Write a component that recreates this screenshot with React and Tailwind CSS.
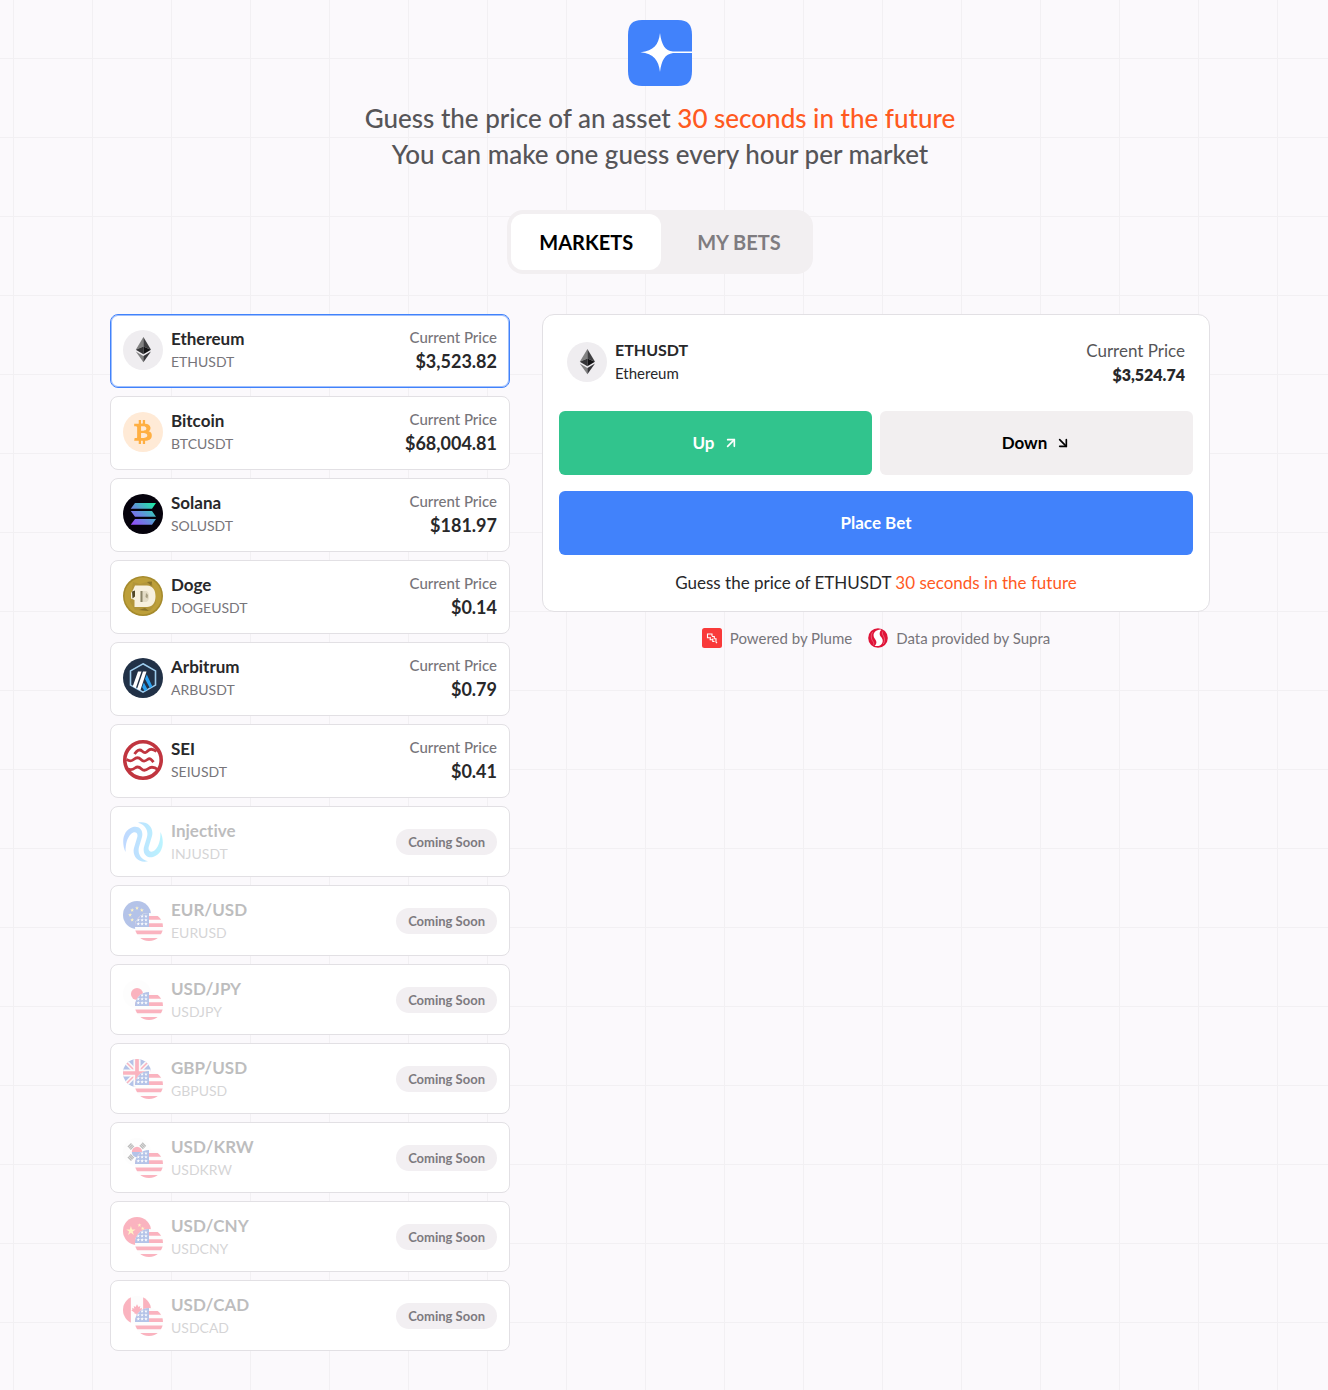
import { useState } from "react";
import { FaBtc } from "react-icons/fa";
import { ArrowDownRight, ArrowUpRight } from "lucide-react";

const STAR = "M0-1 .22-.31 .95-.31 .36 .12 .59 .81 0 .38-.59 .81-.36 .12-.95-.31-.22-.31Z";

function Star({ x, y, r, fill = "#fff" }) {
  return <path d={STAR} transform={`translate(${x} ${y}) scale(${r})`} fill={fill} />;
}

function Logo() {
  return (
    <svg width="64" height="66" viewBox="0 0 64 66" role="img" aria-label="Logo">
      <path d="M14 0H50C60 0 64 5 64 15V51C64 61 60 66 50 66H14C4 66 0 61 0 51V15C0 5 4 0 14 0Z" fill="#4182fb" />
      <path
        d="M32 13C33.5 25 37 30.500 45 31.600H64V33H45C37 34.200 33.500 40 32 52C30.500 40 26 34 12.500 32.300C26 30.500 30.500 25 32 13Z"
        fill="#fff"
      />
    </svg>
  );
}

function EthIcon() {
  return (
    <svg className="size-10 shrink-0" viewBox="0 0 40 40" aria-hidden="true">
      <circle cx="20" cy="20" r="20" fill="#efedf0" />
      <path d="M20.400 7 12.800 19.800 20.400 16.400Z" fill="#828282" />
      <path d="M20.400 7 28 19.800 20.400 16.400Z" fill="#3f3f41" />
      <path d="M12.800 19.800 20.400 16.400V24.300Z" fill="#353537" />
      <path d="M28 19.800 20.400 16.400V24.300Z" fill="#131315" />
      <path d="M12.800 21.600 20.400 26V32.300Z" fill="#828282" />
      <path d="M28 21.600 20.400 26V32.300Z" fill="#37373a" />
    </svg>
  );
}

function BtcIcon() {
  return (
    <span className="flex size-10 shrink-0 items-center justify-center rounded-full bg-[#ffead6] text-[#ffaf42]">
      <FaBtc size={24} aria-hidden="true" />
    </span>
  );
}

function SolIcon() {
  return (
    <svg className="size-10 shrink-0" viewBox="0 0 40 40" aria-hidden="true">
      <defs>
        <linearGradient id="sol" x1="9" y1="32" x2="31" y2="8" gradientUnits="userSpaceOnUse">
          <stop offset="0" stopColor="#9945ff" />
          <stop offset="0.5" stopColor="#5f93d8" />
          <stop offset="1" stopColor="#19f0a0" />
        </linearGradient>
      </defs>
      <circle cx="20" cy="20" r="20" fill="#05020c" />
      <path d="M12 9H33L29 14.700H7.700ZM7.700 17H29L33 22.700H12ZM12 25H33L29 30.700H7.700Z" fill="url(#sol)" />
    </svg>
  );
}

function DogeIcon() {
  return (
    <svg className="size-10 shrink-0" viewBox="0 0 40 40" aria-hidden="true">
      <circle cx="20" cy="20" r="20" fill="#a58a2c" />
      <circle cx="20" cy="20" r="18.500" fill="#bd9f3a" />
      <path d="M10 6 17 8 27 5 30 9 33 27 27 35 12 34 7 26Z" fill="#b2953a" />
      <path d="M12 9.500H24C30 10 32.500 14 32.500 20.500 32.500 27 29 31 24 31H11.500V24L8 22.500V17L10 14Z" fill="#f7f0de" />
      <path d="M17.500 15H22C25 15 26 17 26 20.500S25 26 22 26H17.500Z" fill="#e4dcc6" />
      <path d="M17.500 15H19.500V26H17.500Z" fill="#8b8468" />
      <path d="M9 15.500 12 14.500V20.500L9.500 22.500Z" fill="#504626" />
      <path d="M23 17 25 19 24.500 22.500 22.500 21Z" fill="#a89f83" />
      <path d="M24 6 29 5.500 28.500 10ZM16 34 22 32 26 35Z" fill="#8a7328" />
    </svg>
  );
}

function ArbIcon() {
  return (
    <svg className="size-10 shrink-0" viewBox="0 0 40 40" aria-hidden="true">
      <circle cx="20" cy="20" r="20" fill="#213147" />
      <path d="M20 5.800 32.500 12.900V27.100L20 34.200 7.500 27.100V12.900Z" fill="none" stroke="#9dcced" strokeWidth="1.600" />
      <path d="M15 13.500H18.500L12.800 30.300 9.700 28.500ZM20 13.500H23.500L17.300 32.500 14 31Z" fill="#fff" />
      <path d="M22 21 23.800 16.500 29.400 28.500 26.900 30ZM20.800 24.500 24.600 31.500 21.600 33 19.200 29.200Z" fill="#28a0f0" />
    </svg>
  );
}

function SeiIcon() {
  return (
    <svg className="size-10 shrink-0" viewBox="0 0 40 40" aria-hidden="true">
      <circle cx="20" cy="20" r="18.200" fill="#fff" stroke="#c0353f" strokeWidth="3.600" />
      <g fill="none" stroke="#c0353f" strokeWidth="2.800">
        <path d="M11.500 14C14 10.500 16.500 8.700 19 11S23 13 25 10.800 29.500 8.500 33.500 11.500" />
        <path d="M3.500 19.500C7 21.500 8.500 21.500 11 19.300S15.500 17 18 19.500 22 21.500 24.500 19.500 28.500 19.500 30.500 22.200" />
        <path d="M5 29C8.500 30.500 10 29.500 12 28S16 26.500 18.500 29 23 30.500 25.500 28.500 31.500 27 35.500 30" />
      </g>
    </svg>
  );
}

function InjIcon() {
  return (
    <svg className="size-10 shrink-0" viewBox="0 0 40 40" aria-hidden="true">
      <defs>
        <linearGradient id="inj" x1="0" y1="20" x2="40" y2="20" gradientUnits="userSpaceOnUse">
          <stop offset="0" stopColor="#2f80ff" />
          <stop offset="1" stopColor="#1fdcff" />
        </linearGradient>
      </defs>
      <g fill="url(#inj)">
        <path d="M2.500 30C-2 20 0 8 10 5 17 3.500 20.500 9 19 15L16 25C14.500 31 17 37 25 39.300 15 41.500 9 34 11 26L14.300 15C15.500 10 11 9 8 12 4 16 2.500 22 2.500 30Z" />
        <path d="M37.500 10C42 20 40 32 30 35 23 36.500 19.500 31 21 25L24 15C25.500 9 23 3 15 .700 25 -1.500 31 6 29 14L25.700 25C24.500 30 29 31 32 28 36 24 37.500 18 37.500 10Z" />
      </g>
    </svg>
  );
}

function UsFlag() {
  return (
    <>
      <path d="M0 0H512V512H0Z" fill="#fafafa" />
      <path d="M0 55H512V122H0ZM0 189H512V256H0ZM0 322H512V389H0ZM0 456H512V512H0Z" fill="#f0082d" />
      <path d="M0 0H256V256H0Z" fill="#0a3cb4" />
      {[60, 130, 200].map((y) =>
        [60, 130, 200].map((x) => <Star key={`${x}-${y}`} x={x} y={y} r={34} />)
      )}
    </>
  );
}

function EuFlag() {
  return (
    <>
      <path d="M0 0H512V512H0Z" fill="#0a3cb4" />
      {[[256, 130], [345, 167], [382, 256], [345, 345], [256, 382], [167, 345], [130, 256], [167, 167]].map(([x, y]) => (
        <Star key={`${x}-${y}`} x={x} y={y} r={38} fill="#ffda44" />
      ))}
    </>
  );
}

function JpFlag() {
  return (
    <>
      <path d="M0 0H512V512H0Z" fill="#fafafa" />
      <circle cx="256" cy="256" r="111" fill="#f0082d" />
    </>
  );
}

function GbFlag() {
  return (
    <>
      <path d="M0 0H512V512H0Z" fill="#0a3cb4" />
      <path d="M50 50 462 462M462 50 50 462" stroke="#f0f0f0" strokeWidth="84" />
      <path d="M50 50 462 462M462 50 50 462" stroke="#f0082d" strokeWidth="28" />
      <path d="M256 0V512M0 256H512" stroke="#f0f0f0" strokeWidth="130" />
      <path d="M256 0V512M0 256H512" stroke="#f0082d" strokeWidth="68" />
    </>
  );
}

function KrFlag() {
  return (
    <>
      <path d="M0 0H512V512H0Z" fill="#fafafa" />
      <path d="M161 256a95 95 0 0 1 190 0Z" fill="#f0082d" />
      <path d="M161 256a95 95 0 0 0 190 0Z" fill="#0a3cb4" />
      <g stroke="#222" strokeWidth="24" fill="none">
        <path d="M90 165 155 100M112 187 177 122M134 209 199 144M330 110 395 175M352 88 417 153M308 132 373 197" />
        <path d="M90 347 155 412M112 325 177 390M134 303 199 368" />
      </g>
    </>
  );
}

function CnFlag() {
  return (
    <>
      <path d="M0 0H512V512H0Z" fill="#f0082d" />
      <Star x={145} y={255} r={90} fill="#ffda44" />
      <Star x={300} y={150} r={38} fill="#ffda44" />
      <Star x={360} y={210} r={38} fill="#ffda44" />
      <Star x={360} y={290} r={38} fill="#ffda44" />
    </>
  );
}

function CaFlag() {
  return (
    <>
      <path d="M0 0H512V512H0Z" fill="#fafafa" />
      <path d="M0 0H144V512H0ZM368 0H512V512H368Z" fill="#f0082d" />
      <path d="M256 150 282 200 316 185 306 235 346 215 338 245 360 260 300 305V325H266V360H246V325H212V305L152 260 174 245 166 215 206 235 196 185 230 200Z" fill="#f0082d" />
    </>
  );
}

// base flag at the top left, US flag laid over its lower right corner
function FlagPair({ Base }) {
  return (
    <span className="grid size-10 shrink-0" aria-hidden="true">
      <svg className="col-start-1 row-start-1 size-7 overflow-hidden rounded-full" viewBox="0 0 512 512">
        <Base />
      </svg>
      <svg className="col-start-1 row-start-1 size-7 self-end justify-self-end overflow-hidden rounded-full" viewBox="0 0 512 512">
        <UsFlag />
      </svg>
    </span>
  );
}

function PlumeIcon() {
  return (
    <svg className="size-5 shrink-0" viewBox="0 0 20 20" aria-hidden="true">
      <rect width="20" height="20" rx="2.500" fill="#f93a3a" />
      <path
        d="M7.500 9.700H5.500V6H10V8.200M8.200 9V11.700H10.500M10 8.500H12.300V10.500M10.800 10.500V13.500H12.500M12.300 10.700H14V14L15 15.200"
        fill="none"
        stroke="#fff"
        strokeWidth="1.100"
      />
    </svg>
  );
}

function SupraIcon() {
  return (
    <svg className="size-5 shrink-0" viewBox="0 0 20 20" aria-hidden="true">
      <circle cx="10" cy="10" r="9.800" fill="#df1438" />
      <path
        d="M12.500 1.500C8 2 5.200 4.500 5.600 7.700 6 11 8.500 11.800 8.400 14.200 8.300 16 7.500 17.300 6.500 17.800 11.500 19 14.800 16.500 14.700 12.800 14.600 9.500 11.800 8.700 11.700 6.100 11.600 4 12.300 2.500 13.500 1.900Z"
        fill="#fff"
      />
      <path
        d="M4.700 4.200C2.600 6.700 3 11 5 13.500 6 14.800 6 16 5.300 16.800M14.700 3.500C14 5.500 14.500 6.500 15.500 8 17 10.500 16.800 14 15.200 16"
        fill="none"
        stroke="#f58ba0"
        strokeWidth="0.600"
      />
    </svg>
  );
}

const markets = [
  { name: "Ethereum", symbol: "ETHUSDT", price: "$3,523.82", icon: <EthIcon /> },
  { name: "Bitcoin", symbol: "BTCUSDT", price: "$68,004.81", icon: <BtcIcon /> },
  { name: "Solana", symbol: "SOLUSDT", price: "$181.97", icon: <SolIcon /> },
  { name: "Doge", symbol: "DOGEUSDT", price: "$0.14", icon: <DogeIcon /> },
  { name: "Arbitrum", symbol: "ARBUSDT", price: "$0.79", icon: <ArbIcon /> },
  { name: "SEI", symbol: "SEIUSDT", price: "$0.41", icon: <SeiIcon /> },
  { name: "Injective", symbol: "INJUSDT", icon: <InjIcon /> },
  { name: "EUR/USD", symbol: "EURUSD", icon: <FlagPair Base={EuFlag} /> },
  { name: "USD/JPY", symbol: "USDJPY", icon: <FlagPair Base={JpFlag} /> },
  { name: "GBP/USD", symbol: "GBPUSD", icon: <FlagPair Base={GbFlag} /> },
  { name: "USD/KRW", symbol: "USDKRW", icon: <FlagPair Base={KrFlag} /> },
  { name: "USD/CNY", symbol: "USDCNY", icon: <FlagPair Base={CnFlag} /> },
  { name: "USD/CAD", symbol: "USDCAD", icon: <FlagPair Base={CaFlag} /> },
];

function MarketCard({ market, selected, onSelect }) {
  const live = Boolean(market.price);
  return (
    <button
      type="button"
      disabled={!live}
      onClick={onSelect}
      className={`flex w-full items-start justify-between rounded-lg border bg-white p-3 text-left ${
        selected ? "border-[#4182fb] ring-1 ring-inset ring-[#4182fb]/50" : "border-[#e2e0e4]"
      }`}
    >
      <span className={`flex gap-2 ${live ? "" : "opacity-30"}`}>
        <span className="self-center">{market.icon}</span>
        <span className="flex flex-col">
          <span className="text-[17px] leading-6 font-bold text-[#28282a]">{market.name}</span>
          <span className="text-sm leading-[21px] text-[#77757a]">{market.symbol}</span>
        </span>
      </span>
      {live ? (
        <span className="flex flex-col text-right">
          <span className="text-[15px] leading-[21px] font-medium text-[#77757a]">Current Price</span>
          <span className="text-lg leading-[27px] font-bold text-[#28282a]">{market.price}</span>
        </span>
      ) : (
        <span className="self-center rounded-full bg-[#f2eff2] px-3 py-1 text-[13px] leading-[18px] font-bold text-[#7d7a7f]">
          Coming Soon
        </span>
      )}
    </button>
  );
}

export default function App() {
  const [tab, setTab] = useState("markets");
  const [selected, setSelected] = useState("ETHUSDT");
  const [direction, setDirection] = useState("up");
  const active = markets.find((m) => m.symbol === selected);
  const panelPrice = selected === "ETHUSDT" ? "$3,524.74" : active.price;

  return (
    <div className="min-h-screen bg-[#fbf9fc] bg-[linear-gradient(to_right,#f2f0f3_1px,transparent_1px),linear-gradient(to_bottom,#f2f0f3_1px,transparent_1px)] bg-size-[79px_79px] bg-position-[13px_58px] pt-5 pr-6 pb-9 pl-4 font-['Lato','Open_Sans',sans-serif] text-[#28282a] [font-variant-ligatures:no-common-ligatures]">
      <header className="flex flex-col items-center">
        <Logo />
        <h1 className="mt-3.5 text-center text-[26px] leading-9 font-medium text-[#565558]">
          Guess the price of an asset <span className="text-[#ff5a1f]">30 seconds in the future</span>
          <br />
          You can make one guess every hour per market
        </h1>
        <nav className="mt-9.5 flex gap-2 rounded-2xl bg-[#f2eff1] p-1">
          <button
            type="button"
            onClick={() => setTab("markets")}
            className={`h-14 rounded-xl px-7 text-xl font-bold ${tab === "markets" ? "bg-white text-black" : "text-[#7f7c80]"}`}
          >
            MARKETS
          </button>
          <button
            type="button"
            onClick={() => setTab("bets")}
            className={`h-14 rounded-xl px-7 text-xl font-bold ${tab === "bets" ? "bg-white text-black" : "text-[#7f7c80]"}`}
          >
            MY BETS
          </button>
        </nav>
      </header>

      <main className="mx-auto mt-10 flex max-w-[1100px] flex-col gap-8 md:flex-row md:items-start">
        <div className="flex w-full flex-col gap-2 md:w-[400px] md:shrink-0">
          {markets.map((m) => (
            <MarketCard key={m.symbol} market={m} selected={m.symbol === selected} onSelect={() => setSelected(m.symbol)} />
          ))}
        </div>

        <div className="flex min-w-0 flex-1 flex-col gap-4">
          <section className="flex flex-col gap-4 rounded-xl border border-[#e2e0e4] bg-white p-4">
            <div className="flex items-start justify-between p-2">
              <div className="flex gap-2">
                <span className="self-center">{active.icon}</span>
                <div>
                  <p className="text-base leading-[22px] font-bold">{active.symbol}</p>
                  <p className="text-[15px] leading-6">{active.name}</p>
                </div>
              </div>
              <div className="text-right">
                <p className="text-[17px] leading-[23px] text-[#565558]">Current Price</p>
                <p className="text-base leading-[25px] font-extrabold">{panelPrice}</p>
              </div>
            </div>

            <div className="grid grid-cols-2 gap-2">
              <button
                type="button"
                onClick={() => setDirection("up")}
                aria-pressed={direction === "up"}
                className={`flex h-16 items-center justify-center gap-2 rounded-md text-[17px] leading-6 font-bold ${
                  direction === "up" ? "bg-[#31c48d] text-white" : "bg-[#f2eff0] text-black"
                }`}
              >
                Up <ArrowUpRight size={16} strokeWidth={2.500} aria-hidden="true" />
              </button>
              <button
                type="button"
                onClick={() => setDirection("down")}
                aria-pressed={direction === "down"}
                className={`flex h-16 items-center justify-center gap-2 rounded-md text-[17px] leading-6 font-bold ${
                  direction === "down" ? "bg-[#f05252] text-white" : "bg-[#f2eff0] text-black"
                }`}
              >
                Down <ArrowDownRight size={16} strokeWidth={2.500} aria-hidden="true" />
              </button>
            </div>

            <button type="button" className="h-16 rounded-md bg-[#4182fb] text-[17px] leading-6 font-bold text-white">
              Place Bet
            </button>

            <p className="text-center text-[17px] leading-6">
              Guess the price of {active.symbol} <span className="text-[#ff5a1f]">30 seconds in the future</span>
            </p>
          </section>

          <footer className="flex flex-wrap items-center justify-center gap-4 text-[15px] leading-5 text-[#77757a]">
            <span className="flex items-center gap-2">
              <PlumeIcon />
              Powered by Plume
            </span>
            <span className="flex items-center gap-2">
              <SupraIcon />
              Data provided by Supra
            </span>
          </footer>
        </div>
      </main>
    </div>
  );
}
